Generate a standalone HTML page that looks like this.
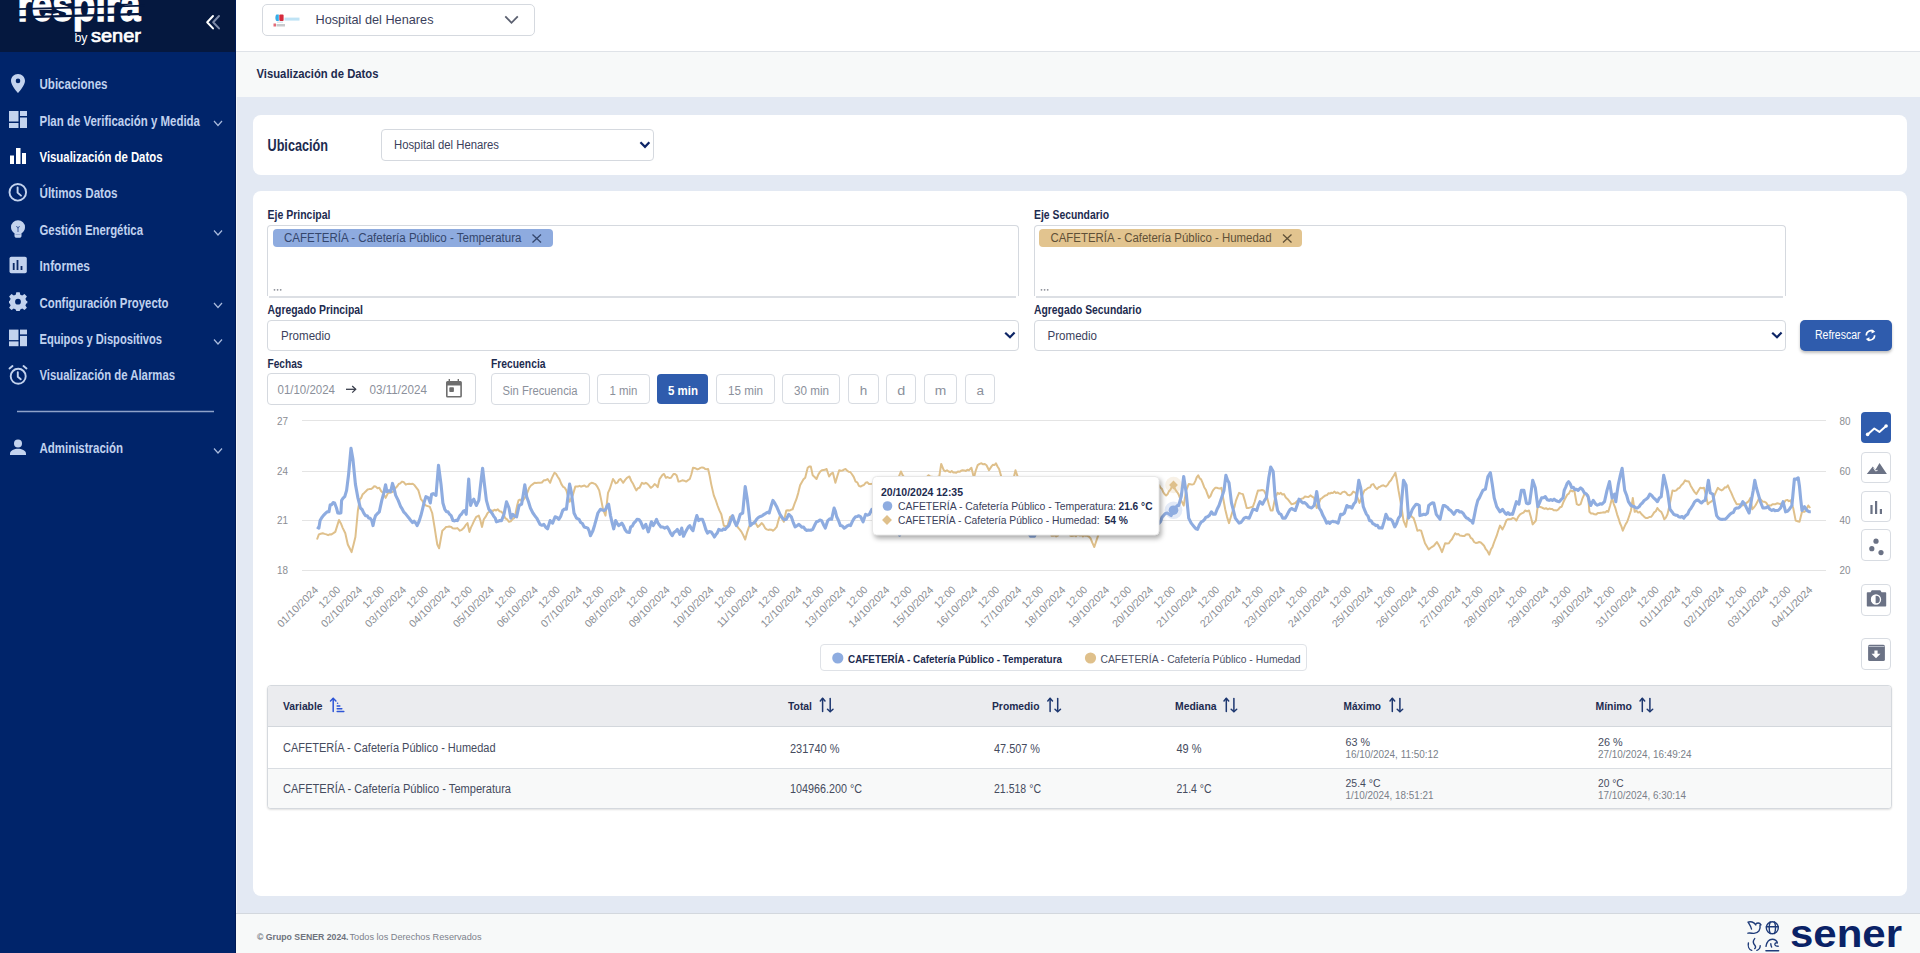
<!DOCTYPE html>
<html><head><meta charset="utf-8"><title>Visualización de Datos</title>
<style>
*{box-sizing:border-box;margin:0;padding:0}
html,body{width:1920px;height:953px;overflow:hidden;background:#e3e9f3;font-family:'Liberation Sans', sans-serif}
.a{position:absolute}
#sb{left:0;top:0;width:236px;height:953px;background:#00246a;border-right:1px solid #001a55}
#sbtop{left:0;top:0;width:235px;height:52px;background:#05183f}
#sbw{left:236px;top:52px;width:1px;height:901px;background:#f4f6fa}
#hdr{left:236px;top:0;width:1684px;height:52px;background:#fff;border-bottom:1px solid #dfe3e8}
#bc{left:236px;top:52px;width:1684px;height:45px;background:#f7f9f9}
.card{background:#fff;border-radius:8px}
.box{border:1px solid #d5d9df;border-radius:4px;background:#fff}
.btn{border:1px solid #d8dce2;border-radius:4px;background:#fff}
#ftr{left:236px;top:913px;width:1684px;height:40px;background:#f7f9f9;border-top:1px solid #d3d8de}
svg{position:absolute;left:0;top:0}
</style></head><body>
<div class="a" id="sb"></div>
<div class="a" id="sbtop"></div>
<div class="a" id="sbw"></div>
<div class="a" id="hdr"></div>
<div class="a box" style="left:262px;top:4px;width:273px;height:32px;border-radius:5px"></div>
<div class="a" id="bc"></div>
<div class="a card" style="left:253px;top:115px;width:1654px;height:60px"></div>
<div class="a box" style="left:381px;top:129px;width:273px;height:32px;border-radius:4px"></div>
<div class="a card" style="left:253px;top:191px;width:1654px;height:705px"></div>
<div class="a box" style="left:267px;top:225px;width:752px;height:71px;border-radius:4px 4px 0 0;border-bottom:none"></div><div class="a" style="left:269px;top:296px;width:747px;height:2px;background:#dcdfe4"></div>
<div class="a box" style="left:1034px;top:225px;width:752px;height:71px;border-radius:4px 4px 0 0;border-bottom:none"></div><div class="a" style="left:1036px;top:296px;width:747px;height:2px;background:#dcdfe4"></div>
<div class="a" style="left:273px;top:229px;width:280px;height:18px;background:#8eabdf;border-radius:4px"></div>
<div class="a" style="left:1039px;top:229px;width:263px;height:18px;background:#e2c48f;border-radius:4px"></div>
<div class="a box" style="left:267px;top:320px;width:752px;height:31px"></div>
<div class="a box" style="left:1034px;top:320px;width:752px;height:31px"></div>
<div class="a" style="left:1800px;top:320px;width:92px;height:31px;background:#2f5cad;border-radius:5px;box-shadow:0 2px 3px rgba(0,0,0,.25)"></div>
<div class="a box" style="left:267px;top:373px;width:209px;height:32px"></div>
<div class="a btn" style="left:491px;top:373px;width:99px;height:32px"></div>
<div class="a btn" style="left:597px;top:374px;width:53px;height:30px"></div>
<div class="a" style="left:657px;top:374px;width:51px;height:30px;background:#2f5cad;border-radius:4px"></div>
<div class="a btn" style="left:716px;top:374px;width:59px;height:30px"></div>
<div class="a btn" style="left:782px;top:374px;width:58px;height:30px"></div>
<div class="a btn" style="left:848px;top:374px;width:31px;height:30px"></div>
<div class="a btn" style="left:886px;top:374px;width:30px;height:30px"></div>
<div class="a btn" style="left:924px;top:374px;width:33px;height:30px"></div>
<div class="a btn" style="left:965px;top:374px;width:30px;height:30px"></div>
<div class="a" style="left:1861px;top:412px;width:30px;height:31px;background:#2f5cad;border-radius:4px"></div>
<div class="a btn" style="left:1861px;top:452px;width:30px;height:31px"></div>
<div class="a btn" style="left:1861px;top:491px;width:30px;height:31px"></div>
<div class="a btn" style="left:1861px;top:529px;width:30px;height:32px"></div>
<div class="a btn" style="left:1861px;top:584px;width:30px;height:32px"></div>
<div class="a btn" style="left:1861px;top:638px;width:30px;height:32px"></div>
<div class="a" style="left:820px;top:644px;width:487px;height:27px;border:1px solid #dfe2e7;border-radius:4px;background:#fff"></div>
<div class="a" style="left:267px;top:685px;width:1625px;height:124px;border:1px solid #d5d9de;border-radius:4px;background:#fff;box-shadow:0 1px 2px rgba(0,0,0,.12);overflow:hidden">
  <div class="a" style="left:0;top:0;width:100%;height:41px;background:#ebecef;border-bottom:1px solid #d3d7dc"></div>
  <div class="a" style="left:0;top:82px;width:100%;height:41px;background:#f8f9f9;border-top:1px solid #d9dde2"></div>
</div>
<div class="a" id="ftr"></div>
<svg width="1920" height="953" viewBox="0 0 1920 953" font-family="'Liberation Sans', sans-serif">
<!-- grid -->
<g stroke="#e4e4e4" stroke-width="1">
<line x1="302" y1="420.5" x2="1826" y2="420.5"/>
<line x1="302" y1="471.5" x2="1826" y2="471.5"/>
<line x1="302" y1="520.5" x2="1826" y2="520.5"/>
<line x1="302" y1="570.5" x2="1826" y2="570.5"/>
</g>
<polyline fill="none" stroke="#dfc08b" stroke-width="2" stroke-linejoin="round" points="317.0,539.5 318.9,534.4 320.8,533.7 322.7,533.2 324.5,533.9 326.4,534.4 328.1,535.2 329.8,534.3 331.5,534.4 333.4,533.2 335.3,531.9 337.1,526.1 339.0,520.0 340.9,523.4 342.8,528.1 345.3,533.2 347.8,544.5 349.7,548.3 351.6,552.1 353.5,544.8 355.4,537.0 357.9,510.5 359.8,499.2 361.3,497.7 362.7,494.2 364.2,492.9 365.9,491.2 367.6,489.5 369.3,489.1 370.9,489.1 372.5,488.2 374.0,486.3 375.6,486.6 377.5,488.2 379.3,487.8 381.2,491.3 383.1,492.9 385.6,497.9 388.1,492.9 389.8,492.8 391.5,492.3 393.2,491.6 395.1,488.4 397.0,486.6 398.7,484.0 400.3,483.3 402.0,481.6 403.9,482.3 405.8,484.7 407.5,483.9 409.1,483.8 410.8,484.1 412.7,483.8 414.6,485.3 416.5,487.8 418.4,490.4 420.9,499.2 422.6,501.2 424.2,504.1 425.9,505.5 427.8,506.1 429.7,506.7 432.2,513.0 434.7,528.1 436.0,536.6 437.3,544.5 439.1,548.3 440.7,539.5 442.3,530.7 444.2,529.1 446.1,526.9 447.8,526.8 449.4,526.5 451.1,526.9 452.7,528.2 454.2,528.5 455.8,528.5 457.4,528.1 459.9,530.7 461.8,529.8 463.7,528.1 465.6,525.2 467.5,523.1 469.4,531.9 470.9,527.6 472.5,524.4 474.4,520.2 476.3,516.8 478.8,515.6 480.4,520.4 482.0,526.9 483.8,519.3 485.7,516.7 487.6,513.0 489.5,511.6 491.4,510.5 493.0,510.9 494.5,509.7 496.1,510.5 497.7,509.3 499.6,511.2 501.5,511.8 503.4,514.0 505.2,518.1 507.1,519.4 509.0,521.8 510.7,521.4 512.4,519.3 514.1,518.1 515.6,513.2 517.0,506.1 518.5,500.4 520.0,499.5 521.4,500.7 522.9,500.4 524.8,497.8 526.7,494.1 529.2,487.8 531.0,485.5 532.9,484.1 534.6,482.8 536.3,482.9 538.0,482.8 540.0,482.8 541.9,482.5 543.8,480.3 545.7,480.2 547.6,479.0 550.1,482.8 551.6,478.7 553.0,475.6 554.5,472.7 556.0,473.8 557.6,476.5 559.5,479.4 561.4,484.1 563.1,486.8 564.7,487.7 566.4,490.4 568.0,496.2 569.6,501.7 571.2,498.4 572.7,495.4 575.3,486.6 577.8,486.6 579.5,485.8 581.1,486.7 582.8,486.0 584.5,485.5 586.1,486.7 587.8,486.6 589.7,483.9 591.6,482.8 593.5,483.3 595.4,484.1 597.3,486.7 599.2,490.4 601.1,499.4 603.0,509.3 605.5,515.6 608.0,492.9 609.7,489.2 611.3,484.2 613.0,479.0 614.3,480.8 615.6,483.4 617.3,482.7 618.9,479.9 620.6,479.0 623.1,482.8 625.0,480.1 626.9,477.8 629.4,476.5 631.3,481.0 633.2,484.1 634.8,487.5 636.3,490.4 637.9,488.3 639.5,487.8 642.0,482.8 643.9,483.8 645.8,482.8 647.5,483.9 649.1,485.6 650.8,487.8 652.7,486.5 654.6,484.1 656.2,485.3 657.7,487.2 659.6,479.0 661.1,476.9 662.5,474.8 664.0,474.0 665.9,477.8 667.6,477.0 669.3,478.0 671.0,477.8 673.5,474.0 675.0,474.1 676.6,475.3 678.5,481.6 680.4,481.2 682.3,480.3 684.2,480.7 686.1,481.6 688.0,480.2 689.8,479.0 691.4,474.3 693.0,467.7 694.4,468.0 695.9,468.5 697.3,469.4 698.7,469.0 700.4,467.9 702.0,467.4 703.7,467.7 705.2,469.0 706.6,469.2 708.1,469.0 709.7,476.0 711.2,484.1 713.8,495.4 715.6,499.8 717.5,505.5 719.4,510.4 721.3,514.3 723.8,525.6 725.7,526.5 727.6,525.6 730.1,516.8 731.4,516.2 732.7,516.8 734.5,521.5 736.4,524.4 738.1,527.7 739.8,529.6 741.5,531.9 743.4,535.5 745.2,539.5 747.1,532.4 749.0,526.9 750.7,524.3 752.4,524.4 754.1,521.8 756.0,523.8 757.8,526.9 759.7,525.4 761.6,523.1 763.3,524.7 765.0,527.9 766.7,529.4 768.2,529.9 769.8,529.6 771.4,529.7 772.9,530.7 774.8,529.2 776.7,526.9 778.4,520.4 780.0,515.6 781.9,518.2 783.8,521.8 786.3,510.5 787.9,510.3 789.5,510.6 791.0,509.8 792.6,509.3 794.5,503.8 796.4,499.2 798.2,493.1 800.1,485.3 801.8,482.2 803.5,479.3 805.2,477.8 807.7,467.7 809.2,466.6 810.8,466.4 812.7,475.3 814.6,477.0 816.5,479.0 818.4,474.4 820.3,471.5 821.9,470.2 823.5,470.0 825.0,469.8 826.6,469.0 829.1,476.5 831.0,473.9 832.9,472.7 835.4,482.8 837.3,476.2 839.2,470.2 840.8,470.7 842.4,470.6 843.9,469.6 845.5,469.0 847.1,470.6 848.6,471.7 850.2,472.0 851.8,474.0 853.7,476.9 855.6,481.6 857.3,482.3 858.9,485.8 860.6,486.6 862.3,485.7 863.9,485.0 865.6,482.8 867.3,482.3 869.0,483.9 870.7,484.1 872.4,483.6 874.0,483.7 875.7,482.8 877.2,481.9 878.7,482.8 880.3,480.5 881.8,480.9 883.3,480.3 884.8,480.5 886.3,480.6 887.8,480.0 889.3,479.7 890.8,479.0 892.3,479.3 893.8,479.4 895.4,478.0 896.9,478.4 898.4,477.8 900.9,471.5 902.8,475.5 904.7,477.8 906.2,479.0 907.7,478.6 909.2,479.9 910.7,480.5 912.2,480.3 913.7,480.2 915.1,480.1 916.6,479.4 918.1,479.6 919.5,479.4 921.0,479.0 922.5,477.4 924.0,477.8 925.6,477.8 927.1,476.8 928.6,475.3 930.3,476.6 931.9,476.7 933.6,477.8 935.0,477.9 936.5,477.3 937.9,476.7 939.3,476.5 941.2,463.9 943.7,470.2 945.4,471.3 947.0,470.2 948.7,471.5 950.2,472.2 951.7,471.0 953.3,472.4 954.8,472.4 956.3,472.7 957.9,471.5 959.5,471.8 961.0,470.8 962.6,470.2 964.2,470.4 965.8,471.0 967.3,469.7 968.9,470.2 971.4,467.7 973.9,477.8 975.8,470.5 977.7,465.2 979.6,463.9 981.5,463.3 983.2,464.3 984.8,464.0 986.5,465.2 989.0,470.2 991.5,466.4 993.0,464.7 994.4,465.1 995.9,463.3 997.5,466.5 999.1,469.0 1001.6,477.8 1003.3,479.4 1005.0,481.9 1006.7,482.8 1008.2,482.2 1009.8,482.5 1011.4,481.3 1012.9,481.6 1014.2,475.8 1015.5,470.2 1018.0,477.8 1020.0,480.3 1021.4,481.1 1022.8,481.4 1024.2,481.5 1025.6,480.6 1027.0,481.2 1028.4,480.8 1029.8,480.6 1031.2,481.4 1032.6,481.6 1034.0,483.5 1035.4,484.8 1036.8,485.8 1038.2,487.5 1039.6,487.4 1041.0,488.5 1042.4,490.3 1043.8,491.2 1045.2,492.9 1046.8,503.0 1048.3,514.1 1049.9,525.3 1051.5,535.7 1053.1,535.7 1054.7,535.3 1056.2,536.4 1057.8,535.7 1059.4,532.3 1060.9,526.8 1062.5,521.6 1064.1,518.1 1065.7,521.6 1067.2,527.6 1068.8,530.4 1070.4,535.7 1071.8,536.1 1073.1,535.8 1074.5,535.3 1075.9,536.3 1077.3,534.7 1078.6,535.0 1080.0,535.6 1081.4,534.7 1082.8,536.4 1084.1,535.2 1085.5,535.7 1087.2,535.8 1088.8,536.5 1090.5,538.2 1092.4,542.9 1094.3,547.0 1096.2,541.2 1098.1,535.7 1099.5,531.3 1101.0,526.7 1102.4,522.3 1103.8,517.9 1105.2,512.7 1106.7,507.1 1108.1,503.0 1109.5,501.8 1110.9,500.1 1112.3,498.7 1113.7,498.5 1115.1,497.8 1116.5,495.6 1117.9,494.7 1119.3,493.7 1120.7,492.9 1122.1,492.7 1123.5,491.8 1124.9,491.4 1126.3,491.1 1127.7,489.9 1129.1,490.1 1130.5,489.7 1131.9,487.5 1133.3,487.8 1134.7,488.4 1136.1,487.7 1137.5,486.2 1138.9,486.6 1140.3,486.7 1141.7,487.0 1143.1,485.6 1144.5,485.7 1145.9,485.3 1147.2,486.1 1148.5,485.9 1149.9,486.2 1151.2,485.2 1152.5,485.6 1153.8,484.7 1155.1,485.7 1156.5,485.9 1157.8,485.6 1159.1,485.3 1160.5,487.8 1161.9,488.8 1163.3,492.2 1164.7,494.3 1166.1,495.4 1167.6,494.2 1169.0,491.2 1170.5,489.6 1171.9,486.5 1173.4,484.7 1174.7,488.2 1176.0,490.7 1177.3,492.3 1178.6,494.4 1179.9,497.9 1181.8,501.6 1183.7,505.5 1186.2,490.4 1188.7,484.1 1190.4,484.2 1192.1,484.6 1193.8,484.1 1195.3,481.1 1196.7,477.3 1198.2,475.3 1199.7,478.4 1201.1,479.4 1202.6,482.8 1204.2,487.2 1205.8,489.7 1207.3,493.8 1208.9,497.9 1210.5,496.0 1212.1,492.1 1213.6,489.6 1215.2,487.8 1216.8,487.8 1218.3,488.2 1219.9,488.5 1221.5,487.8 1223.3,498.9 1225.2,509.3 1227.1,517.1 1229.0,523.1 1230.9,516.8 1232.8,510.5 1234.4,507.0 1235.9,500.9 1237.5,496.7 1239.1,492.9 1241.0,493.6 1242.9,494.1 1244.8,500.6 1246.7,508.0 1248.2,508.1 1249.8,507.6 1251.4,507.1 1252.9,506.7 1254.6,502.0 1256.3,496.0 1258.0,490.4 1260.0,490.4 1261.9,490.0 1263.8,490.4 1265.3,493.3 1266.9,496.7 1268.8,504.3 1270.7,510.5 1272.6,510.5 1275.1,497.9 1277.6,492.9 1279.2,494.0 1280.8,492.9 1282.3,494.5 1283.9,494.1 1285.8,497.6 1287.7,499.2 1289.6,501.7 1291.5,504.2 1293.4,503.7 1295.3,503.0 1297.0,501.1 1298.6,500.5 1300.3,499.2 1301.9,498.6 1303.4,498.2 1305.0,496.4 1306.6,496.7 1308.5,497.0 1310.4,495.4 1312.2,496.7 1314.1,497.9 1315.4,502.8 1316.7,508.0 1318.6,504.2 1320.4,499.2 1322.1,498.1 1323.8,496.6 1325.5,495.4 1327.0,495.1 1328.4,493.3 1329.9,493.6 1331.4,492.7 1332.8,493.1 1334.3,491.6 1335.9,493.1 1337.4,492.4 1339.0,493.4 1340.6,494.1 1342.5,492.1 1344.4,491.6 1346.1,492.7 1347.7,494.8 1349.4,495.4 1351.3,494.3 1353.2,491.6 1355.7,492.9 1357.6,497.9 1359.5,503.0 1361.2,498.4 1362.8,494.0 1364.5,490.4 1366.4,489.3 1368.3,487.8 1370.0,487.4 1371.6,484.6 1373.3,484.1 1375.2,487.2 1377.1,489.1 1378.7,487.2 1380.2,486.6 1381.8,485.7 1383.4,485.3 1385.9,486.6 1387.6,484.9 1389.3,482.0 1391.0,480.3 1392.5,477.5 1393.9,475.5 1395.4,472.7 1397.0,480.8 1398.5,490.4 1401.0,504.2 1403.5,520.6 1406.1,526.9 1408.0,514.3 1409.4,515.7 1410.8,515.4 1412.2,517.2 1413.6,518.1 1415.5,523.9 1417.4,530.7 1419.3,530.1 1421.2,530.7 1423.1,537.1 1425.0,543.3 1426.8,546.3 1428.7,549.5 1430.4,548.0 1432.1,546.9 1433.8,545.8 1435.3,544.0 1436.9,542.0 1438.6,544.7 1440.3,548.1 1442.0,552.1 1443.5,548.0 1445.1,543.3 1447.0,543.6 1448.9,543.3 1450.5,540.8 1452.1,539.0 1453.6,535.9 1455.2,533.2 1456.8,534.5 1458.3,533.9 1459.9,535.6 1461.5,535.7 1463.0,536.1 1464.5,536.0 1466.0,534.6 1467.5,534.3 1469.0,534.4 1470.7,537.8 1472.4,538.9 1474.1,542.0 1475.8,543.0 1477.4,542.8 1479.1,542.0 1480.8,542.5 1482.4,544.0 1484.1,545.8 1485.8,549.2 1487.5,551.2 1489.2,554.6 1490.9,549.6 1492.5,546.9 1494.2,542.0 1496.7,535.7 1498.3,530.5 1500.0,525.6 1502.5,529.4 1504.4,525.6 1506.3,520.6 1507.9,519.2 1509.4,519.2 1511.0,519.1 1512.6,518.1 1514.5,518.4 1516.4,520.6 1518.2,516.9 1520.1,514.3 1521.8,513.4 1523.5,512.6 1525.2,510.5 1527.1,511.4 1529.0,510.5 1530.8,516.7 1532.7,524.4 1534.3,522.5 1535.9,520.6 1537.8,505.5 1539.5,506.8 1541.1,507.2 1542.8,508.0 1544.5,508.8 1546.1,508.2 1547.8,509.3 1549.3,508.6 1550.8,508.9 1552.2,509.0 1553.7,510.2 1555.2,510.3 1556.7,510.5 1558.4,509.4 1560.0,507.3 1561.7,506.7 1563.6,501.7 1565.5,497.9 1567.2,494.8 1568.8,493.6 1570.5,490.4 1572.4,491.4 1574.3,490.4 1576.8,504.2 1578.7,505.1 1580.6,504.2 1582.5,498.3 1584.4,494.1 1586.2,493.9 1588.1,495.4 1589.4,511.8 1591.1,513.5 1592.7,513.4 1594.4,514.3 1596.1,514.4 1597.8,513.1 1599.5,513.0 1601.0,512.7 1602.4,512.6 1603.9,512.3 1605.4,512.4 1606.8,511.0 1608.3,511.8 1610.2,505.3 1612.1,497.9 1613.8,504.1 1615.4,508.2 1617.1,514.3 1618.5,518.3 1619.9,523.0 1621.4,526.4 1622.8,530.7 1624.3,527.1 1625.7,524.1 1627.2,521.8 1629.1,516.2 1631.0,510.5 1632.8,497.9 1634.7,511.8 1636.4,510.8 1638.1,512.6 1639.8,511.8 1641.4,514.0 1642.9,515.4 1644.5,517.2 1646.1,518.1 1647.8,517.9 1649.4,517.0 1651.1,516.8 1652.7,514.8 1654.2,512.4 1655.8,511.2 1657.4,508.0 1659.3,510.5 1661.2,511.8 1662.8,515.1 1664.3,519.3 1665.9,517.6 1667.5,514.3 1669.2,506.8 1670.8,498.9 1672.5,490.4 1674.4,491.0 1676.3,490.4 1678.0,488.5 1679.6,487.8 1681.3,485.3 1683.2,483.6 1685.1,480.3 1687.0,481.3 1688.9,481.6 1690.8,485.9 1692.7,489.1 1694.6,492.1 1696.4,494.1 1698.3,490.8 1700.2,487.8 1702.1,488.2 1704.0,487.8 1705.9,495.1 1707.8,504.2 1709.5,502.6 1711.1,501.6 1712.8,500.4 1714.5,495.2 1716.1,491.7 1717.8,487.8 1719.7,489.4 1721.6,490.4 1723.2,489.4 1724.8,487.3 1726.3,487.5 1727.9,485.3 1729.6,489.4 1731.2,492.6 1732.9,496.7 1734.8,500.8 1736.7,504.2 1738.3,504.3 1740.0,504.2 1741.4,504.9 1742.8,505.5 1744.7,504.0 1746.6,502.9 1748.5,501.4 1750.4,497.9 1752.2,509.2 1753.8,507.6 1755.4,505.5 1757.3,502.1 1759.2,497.9 1760.9,499.7 1762.5,501.4 1764.2,501.7 1766.1,502.6 1768.0,505.5 1769.5,505.5 1771.0,505.5 1772.5,504.2 1774.0,504.3 1775.5,504.2 1777.0,503.3 1778.5,503.6 1780.1,504.0 1781.6,503.4 1783.1,504.2 1785.6,500.4 1787.3,499.9 1788.9,501.2 1790.6,500.4 1791.9,504.3 1793.2,508.0 1795.7,520.6 1797.6,521.2 1799.5,521.8 1802.0,511.8 1804.5,511.8 1806.4,509.6 1808.3,505.5 1810.2,508.0"/>
<polyline fill="none" stroke="#8eace0" stroke-width="3.1" stroke-linejoin="round" points="317.0,526.9 318.9,528.1 320.1,520.6 321.7,517.7 323.3,515.6 325.2,513.7 327.1,511.9 329.0,511.8 330.2,504.8 331.7,504.6 333.1,502.6 334.6,503.0 336.5,508.0 337.8,513.0 339.4,513.1 340.9,513.0 341.6,500.4 343.1,498.2 344.7,496.7 346.6,490.4 348.5,475.3 351.0,448.2 352.9,458.9 355.4,484.1 357.9,497.9 360.4,508.0 362.1,509.5 363.8,513.1 365.5,515.6 367.1,515.7 368.6,517.9 370.2,518.3 371.8,520.6 373.0,525.6 374.3,519.6 375.6,515.6 377.5,513.5 379.3,511.8 381.8,500.4 383.7,493.3 385.6,484.7 386.9,491.6 388.8,490.7 390.7,491.6 392.5,483.4 394.1,488.7 395.7,495.4 398.2,500.4 400.7,506.7 402.3,509.2 403.9,512.2 405.4,513.6 407.0,515.6 408.9,517.9 410.8,520.6 412.5,522.6 414.1,521.2 415.8,523.1 417.1,525.6 419.0,521.5 420.9,515.6 422.6,508.8 424.2,502.1 425.9,496.7 428.4,497.9 430.3,503.0 431.6,494.1 433.1,493.6 434.5,494.5 436.0,495.4 438.5,465.2 441.0,484.1 442.9,503.0 444.8,509.3 446.4,511.6 448.0,511.7 449.5,514.2 451.1,515.6 453.0,520.6 454.5,520.9 455.9,520.3 457.4,520.6 459.9,515.6 461.6,514.0 463.3,511.2 465.0,510.5 466.2,514.3 468.7,479.0 470.6,505.5 472.2,501.3 473.8,499.2 476.3,505.5 478.8,500.4 480.7,483.6 482.6,468.3 484.5,484.8 486.4,500.4 488.9,509.3 490.5,511.3 492.0,513.3 493.6,516.1 495.2,518.1 496.4,521.8 498.1,521.3 499.8,520.5 501.5,520.6 504.0,514.3 506.5,501.7 509.0,508.0 510.9,518.1 512.8,514.3 514.7,516.3 516.6,516.8 519.1,505.5 521.6,504.2 523.2,494.9 524.8,484.7 526.7,496.7 528.5,501.7 530.4,508.0 532.9,513.0 534.8,515.7 536.7,518.1 538.4,521.3 540.0,524.4 541.9,525.3 543.8,524.4 545.7,527.2 547.6,528.8 550.1,520.6 552.6,523.1 555.1,516.8 557.0,517.5 558.9,519.3 560.8,516.1 562.7,510.5 564.5,509.0 566.4,509.3 568.0,496.5 569.6,484.1 571.5,492.9 574.0,513.0 576.5,518.1 579.0,519.3 580.7,522.5 582.4,523.5 584.1,526.9 586.0,527.5 587.8,528.1 589.1,530.8 590.4,535.7 592.9,530.7 594.6,525.2 596.2,519.5 597.9,513.0 600.4,509.3 602.3,510.1 604.2,510.5 605.7,509.3 607.1,505.9 608.6,504.2 610.5,515.6 612.1,522.7 613.7,528.8 615.6,520.6 617.2,523.3 618.7,525.6 620.2,524.5 621.8,523.1 623.5,525.9 625.2,529.8 626.9,531.9 629.4,532.5 630.7,526.9 632.3,526.1 633.9,523.0 635.4,521.6 637.0,519.3 638.9,519.5 640.7,521.8 643.3,528.1 645.8,524.4 648.3,531.9 649.8,527.3 651.4,521.8 653.3,525.6 654.9,522.8 656.5,519.3 658.0,523.0 659.4,525.1 660.9,526.9 662.8,527.0 664.7,528.1 667.2,526.9 668.9,529.6 670.5,533.2 672.2,535.7 673.9,532.5 675.6,531.4 677.3,529.4 679.8,534.4 681.7,528.1 683.5,536.3 685.1,532.8 686.6,530.0 688.2,527.2 689.8,525.6 691.4,528.8 693.0,530.7 694.9,522.3 696.8,515.6 698.7,520.6 700.5,519.3 702.4,519.3 704.1,523.7 705.8,529.5 707.5,533.2 709.4,531.5 711.2,531.9 712.8,534.3 714.4,537.0 715.9,534.6 717.3,532.9 718.8,529.4 720.4,530.2 722.0,530.3 723.5,528.9 725.1,529.4 727.0,527.3 728.9,525.6 730.8,520.3 732.7,515.6 734.5,521.5 736.4,525.6 738.3,521.0 740.2,514.3 742.7,513.0 745.2,486.6 747.1,497.9 748.7,510.9 750.3,525.6 752.2,523.6 754.1,523.1 756.6,519.3 758.1,517.7 759.6,516.7 761.1,516.3 762.6,515.5 764.1,514.3 765.8,513.3 767.5,512.2 769.2,513.0 771.0,506.5 772.9,500.4 774.8,503.2 776.7,506.7 778.4,510.7 780.0,514.3 782.5,518.1 784.4,519.8 786.3,519.3 788.8,514.3 791.3,516.8 793.2,522.3 795.1,526.9 797.0,525.7 798.9,524.4 800.5,525.9 802.0,527.3 803.6,527.1 805.2,529.4 806.7,530.4 808.2,530.1 809.7,530.3 811.2,530.1 812.7,529.4 814.6,525.3 816.5,521.8 818.2,521.2 819.9,520.0 821.6,520.6 823.5,524.7 825.3,528.1 827.8,520.6 829.7,518.9 831.6,519.3 834.1,508.0 835.4,511.4 836.7,516.8 838.5,520.5 840.4,525.6 842.3,526.0 844.2,528.1 845.8,527.1 847.4,525.8 848.9,525.0 850.5,525.6 852.2,521.8 853.9,518.8 855.6,516.8 857.3,516.5 858.9,515.7 860.6,516.8 863.1,521.8 865.6,514.3 867.5,515.2 869.4,514.3 871.9,509.3 873.8,510.2 875.7,510.5 877.4,511.4 879.0,513.3 880.7,515.6 882.3,515.9 883.9,516.5 885.4,516.6 887.0,518.1 888.6,520.8 890.1,523.0 891.7,523.6 893.3,525.6 894.9,527.9 896.5,529.4 898.0,531.8 899.6,535.1 901.3,532.0 903.0,529.1 904.7,526.9 906.2,526.7 907.7,524.0 909.2,522.7 910.7,523.9 912.2,521.8 913.8,523.1 915.4,523.5 916.9,525.7 918.5,526.9 920.1,524.8 921.6,525.1 923.2,525.2 924.8,523.1 926.4,525.2 928.0,526.1 929.5,526.3 931.1,528.1 932.7,527.5 934.2,526.7 935.8,527.9 937.4,526.9 939.0,527.3 940.5,528.2 942.1,527.4 943.7,528.1 945.3,527.1 946.9,528.2 948.4,528.4 950.0,526.9 951.6,526.5 953.1,525.1 954.7,523.8 956.3,521.8 957.9,523.7 959.5,523.7 961.0,525.7 962.6,526.9 964.2,526.9 965.8,526.4 967.3,526.7 968.9,528.1 970.5,527.3 972.0,526.9 973.6,527.7 975.2,526.9 976.8,528.3 978.4,527.4 979.9,528.8 981.5,528.1 983.1,529.6 984.6,529.8 986.2,528.8 987.8,529.4 989.4,528.4 991.0,528.1 992.5,527.7 994.1,528.1 995.7,527.1 997.2,527.8 998.8,528.2 1000.4,526.9 1002.0,528.0 1003.5,527.5 1005.1,528.2 1006.7,528.1 1008.2,528.8 1009.8,527.1 1011.4,528.5 1012.9,528.1 1014.3,529.1 1015.7,528.8 1017.2,528.7 1018.6,528.0 1020.0,528.1 1021.5,527.6 1023.0,529.3 1024.6,528.5 1026.1,529.9 1027.6,529.4 1029.2,534.0 1030.7,536.3 1032.6,536.1 1034.5,536.3 1036.0,532.3 1037.6,528.8 1039.1,529.7 1040.6,529.1 1042.2,527.6 1043.7,527.3 1045.2,528.1 1046.6,527.3 1048.0,529.1 1049.4,528.8 1050.8,527.3 1052.2,528.9 1053.6,529.3 1055.0,528.5 1056.4,527.7 1057.8,528.1 1059.2,528.1 1060.6,526.9 1062.0,526.5 1063.4,528.7 1064.8,527.8 1066.2,527.4 1067.6,528.2 1069.0,526.9 1070.4,526.9 1071.8,527.6 1073.2,527.4 1074.6,525.8 1076.0,525.7 1077.4,525.7 1078.8,525.4 1080.2,526.1 1081.6,525.2 1083.0,525.6 1084.4,525.7 1085.8,525.3 1087.2,527.4 1088.6,526.4 1090.0,526.9 1091.4,527.5 1092.8,528.5 1094.2,527.6 1095.6,528.1 1097.0,528.8 1098.4,527.5 1099.8,527.3 1101.2,527.0 1102.5,525.6 1103.9,526.3 1105.3,525.4 1106.7,524.7 1108.1,525.6 1109.5,526.5 1110.9,525.1 1112.3,526.0 1113.7,526.7 1115.1,526.5 1116.5,526.0 1117.9,526.7 1119.3,526.9 1120.7,526.9 1122.1,527.4 1123.5,525.7 1124.9,526.6 1126.3,525.7 1127.7,525.6 1129.1,526.7 1130.5,525.9 1131.9,525.9 1133.3,525.6 1134.7,526.1 1136.1,526.3 1137.5,525.1 1138.9,525.3 1140.3,524.9 1141.7,524.8 1143.1,525.1 1144.5,524.4 1145.9,524.4 1147.2,524.3 1148.5,524.1 1149.9,525.1 1151.2,524.4 1152.5,524.7 1153.8,524.7 1155.1,522.9 1156.5,523.5 1157.8,524.3 1159.1,523.1 1160.6,521.4 1162.0,517.2 1163.5,515.6 1165.4,513.4 1167.3,513.0 1169.2,514.2 1171.1,515.6 1173.4,509.9 1174.7,507.8 1176.1,507.1 1177.4,505.6 1178.7,505.5 1181.2,496.7 1183.7,476.5 1186.2,492.9 1188.7,518.1 1191.2,523.1 1192.8,525.1 1194.3,526.9 1195.9,528.8 1197.5,529.4 1199.4,524.8 1201.3,521.8 1202.9,521.1 1204.4,519.7 1206.0,517.2 1207.6,516.8 1209.5,515.2 1211.4,511.8 1213.3,514.2 1215.2,514.3 1217.1,509.2 1219.0,505.5 1221.5,497.9 1224.0,490.4 1225.9,475.3 1227.5,480.1 1229.0,482.8 1231.5,503.0 1233.4,510.3 1235.3,518.1 1237.2,520.6 1239.1,523.1 1240.8,522.6 1242.4,520.6 1244.1,518.1 1245.8,517.3 1247.5,517.9 1249.2,518.1 1251.1,513.7 1252.9,509.3 1254.8,509.5 1256.7,510.5 1258.3,505.4 1260.0,501.7 1262.5,504.2 1264.4,500.6 1266.3,497.9 1268.8,477.8 1270.7,467.1 1273.2,471.5 1275.1,496.7 1277.6,510.5 1279.3,513.6 1281.0,514.4 1282.7,518.1 1285.2,518.1 1286.9,515.3 1288.5,512.1 1290.2,509.3 1291.9,508.5 1293.6,509.7 1295.3,510.5 1297.2,505.1 1299.0,499.2 1300.9,501.1 1302.8,503.0 1304.7,502.6 1306.6,504.2 1308.3,506.6 1309.9,507.4 1311.6,508.0 1314.1,505.5 1315.4,499.7 1316.7,491.6 1319.2,508.0 1321.1,510.9 1323.0,515.6 1324.8,518.8 1326.7,523.1 1328.2,521.8 1329.7,523.3 1331.2,521.9 1332.6,521.3 1334.1,521.8 1335.6,521.8 1338.1,523.1 1340.6,514.3 1342.5,514.6 1344.4,513.0 1346.9,505.5 1348.6,507.1 1350.2,506.6 1351.9,508.0 1353.8,504.0 1355.7,501.7 1357.2,492.0 1358.8,480.3 1360.7,487.8 1363.3,506.7 1364.8,510.3 1366.4,514.1 1368.0,516.1 1369.5,520.6 1371.1,520.8 1372.7,523.6 1374.2,524.2 1375.8,525.6 1377.4,525.2 1378.9,527.9 1380.5,527.8 1382.1,528.1 1384.0,521.9 1385.9,514.3 1388.4,519.3 1390.3,519.0 1392.2,520.6 1394.7,526.9 1396.6,523.4 1398.5,518.1 1400.4,515.6 1402.0,496.9 1403.5,480.3 1406.1,485.3 1408.6,518.1 1410.5,514.6 1412.4,509.3 1414.2,506.6 1416.1,504.2 1417.7,504.5 1419.3,505.5 1419.9,515.6 1421.8,515.1 1423.7,514.3 1425.6,514.7 1427.5,513.0 1428.7,505.5 1430.4,504.1 1432.1,502.9 1433.8,503.0 1436.3,514.3 1438.2,516.9 1440.1,519.3 1441.7,511.8 1443.2,505.5 1444.6,505.5 1446.1,506.6 1447.5,507.3 1448.9,509.3 1450.6,510.3 1452.2,512.2 1453.9,514.3 1456.4,510.5 1458.1,510.5 1459.8,512.0 1461.5,511.8 1463.2,513.4 1464.8,516.0 1466.5,518.1 1468.1,518.6 1469.7,520.2 1471.2,520.7 1472.8,523.1 1474.5,514.9 1476.1,506.8 1477.8,500.4 1479.5,497.6 1481.2,493.9 1482.9,490.4 1485.4,489.1 1487.9,476.5 1490.4,472.7 1492.3,484.6 1494.2,497.9 1496.7,506.7 1498.3,509.2 1500.0,511.8 1502.5,509.3 1505.0,513.0 1506.5,514.3 1508.0,512.6 1509.6,514.5 1511.1,513.9 1512.6,514.3 1514.5,508.0 1516.4,501.7 1518.9,504.2 1521.4,490.4 1523.9,490.4 1526.4,503.0 1528.0,503.8 1529.6,503.0 1531.2,491.4 1532.7,480.3 1535.3,487.8 1537.8,506.7 1539.7,502.3 1541.6,497.9 1543.4,497.8 1545.3,496.7 1547.2,499.7 1549.1,500.4 1550.8,499.6 1552.4,500.4 1554.1,499.2 1555.8,500.5 1557.5,501.2 1559.2,501.7 1561.1,499.6 1563.0,497.9 1564.2,490.4 1565.7,487.1 1567.1,483.5 1568.6,481.6 1570.2,483.8 1571.8,487.8 1573.4,487.4 1574.9,489.7 1576.5,489.2 1578.1,490.4 1580.6,487.8 1582.5,489.5 1584.4,492.9 1586.2,493.8 1588.1,496.7 1589.4,501.9 1590.7,505.5 1593.2,500.4 1595.7,504.2 1597.3,505.1 1598.8,504.6 1600.4,503.7 1602.0,504.2 1604.5,501.7 1607.0,490.4 1609.5,481.6 1612.1,497.9 1614.6,494.1 1615.8,501.7 1617.1,492.3 1618.4,484.1 1620.2,475.7 1622.1,468.3 1623.4,479.3 1624.7,490.4 1626.6,495.2 1628.4,501.7 1631.0,505.5 1632.7,506.2 1634.3,506.6 1636.0,508.0 1637.6,507.9 1639.2,506.6 1640.7,504.4 1642.3,503.0 1644.2,500.5 1646.1,499.2 1647.9,497.8 1649.8,494.1 1651.7,495.5 1653.6,497.9 1655.5,499.5 1657.4,501.7 1659.3,498.0 1661.2,496.7 1663.7,475.3 1665.6,483.2 1667.5,491.6 1670.0,509.3 1671.9,511.7 1673.8,514.3 1675.5,515.1 1677.1,515.2 1678.8,516.8 1680.5,517.2 1682.1,516.5 1683.8,518.1 1685.7,515.6 1687.6,514.3 1689.3,510.4 1691.0,508.2 1692.7,505.5 1694.6,501.9 1696.4,500.4 1698.1,500.1 1699.8,501.7 1701.5,503.0 1703.3,501.1 1705.2,500.4 1706.8,490.6 1708.4,480.3 1710.3,492.9 1712.8,494.1 1714.7,504.9 1716.6,515.6 1718.5,518.1 1720.4,519.3 1722.0,519.4 1723.6,519.2 1725.1,519.3 1726.7,518.1 1728.4,516.1 1730.0,514.3 1731.7,513.0 1733.4,512.5 1735.0,508.8 1736.7,508.0 1738.3,507.9 1740.0,506.7 1741.4,504.5 1742.8,501.7 1744.7,503.8 1746.6,508.0 1749.1,513.0 1751.6,499.2 1753.2,490.6 1754.8,480.3 1756.3,487.5 1757.9,492.9 1760.4,501.7 1762.9,508.0 1764.6,507.9 1766.3,507.7 1768.0,506.7 1769.9,509.3 1771.8,510.5 1773.4,509.6 1774.9,510.6 1776.5,510.5 1778.1,510.5 1780.6,508.0 1783.1,501.7 1785.6,511.8 1787.5,511.3 1789.4,509.2 1791.9,505.5 1794.4,479.0 1796.3,479.1 1798.2,477.8 1799.5,486.6 1800.7,499.2 1802.0,510.5 1804.5,506.7 1807.0,510.5 1809.5,511.8 1810.8,511.8"/>
<!-- tooltip -->
<rect x="872.5" y="476.5" width="286.5" height="58.5" rx="4" fill="#fff" stroke="#e8e8e8" style="filter:drop-shadow(2px 3px 2.5px rgba(0,0,0,.33))"/>
<circle cx="887.5" cy="506" r="4.8" fill="#8eace0"/>
<rect x="883.5" y="516.5" width="7" height="7" fill="#dfc08b" transform="rotate(45 887 520)"/>
<!-- hover markers -->
<circle cx="1173.5" cy="485" r="8.3" fill="#dfc08b" opacity=".22"/>
<rect x="1170.4" y="481.9" width="6.2" height="6.2" fill="#dfc08b" transform="rotate(45 1173.5 485)"/>
<circle cx="1173.5" cy="510.2" r="8.8" fill="#8eace0" opacity=".25"/>
<circle cx="1173.5" cy="510.2" r="4.8" fill="#8eace0"/>
<!-- legend dots -->
<circle cx="837.8" cy="658" r="5.6" fill="#8eace0"/>
<circle cx="1090.5" cy="658" r="5.6" fill="#dfc08b"/>
<text transform="translate(318.9,590.6) rotate(-45)" x="0" y="0" font-size="10.5" fill="#8a8d93" text-anchor="end" textLength="53" lengthAdjust="spacingAndGlyphs">01/10/2024</text>
<text transform="translate(340.9,590.6) rotate(-45)" x="0" y="0" font-size="10.5" fill="#8a8d93" text-anchor="end" textLength="25.5" lengthAdjust="spacingAndGlyphs">12:00</text>
<text transform="translate(362.8,590.6) rotate(-45)" x="0" y="0" font-size="10.5" fill="#8a8d93" text-anchor="end" textLength="53" lengthAdjust="spacingAndGlyphs">02/10/2024</text>
<text transform="translate(384.8,590.6) rotate(-45)" x="0" y="0" font-size="10.5" fill="#8a8d93" text-anchor="end" textLength="25.5" lengthAdjust="spacingAndGlyphs">12:00</text>
<text transform="translate(406.8,590.6) rotate(-45)" x="0" y="0" font-size="10.5" fill="#8a8d93" text-anchor="end" textLength="53" lengthAdjust="spacingAndGlyphs">03/10/2024</text>
<text transform="translate(428.8,590.6) rotate(-45)" x="0" y="0" font-size="10.5" fill="#8a8d93" text-anchor="end" textLength="25.5" lengthAdjust="spacingAndGlyphs">12:00</text>
<text transform="translate(450.8,590.6) rotate(-45)" x="0" y="0" font-size="10.5" fill="#8a8d93" text-anchor="end" textLength="53" lengthAdjust="spacingAndGlyphs">04/10/2024</text>
<text transform="translate(472.7,590.6) rotate(-45)" x="0" y="0" font-size="10.5" fill="#8a8d93" text-anchor="end" textLength="25.5" lengthAdjust="spacingAndGlyphs">12:00</text>
<text transform="translate(494.7,590.6) rotate(-45)" x="0" y="0" font-size="10.5" fill="#8a8d93" text-anchor="end" textLength="53" lengthAdjust="spacingAndGlyphs">05/10/2024</text>
<text transform="translate(516.7,590.6) rotate(-45)" x="0" y="0" font-size="10.5" fill="#8a8d93" text-anchor="end" textLength="25.5" lengthAdjust="spacingAndGlyphs">12:00</text>
<text transform="translate(538.6,590.6) rotate(-45)" x="0" y="0" font-size="10.5" fill="#8a8d93" text-anchor="end" textLength="53" lengthAdjust="spacingAndGlyphs">06/10/2024</text>
<text transform="translate(560.6,590.6) rotate(-45)" x="0" y="0" font-size="10.5" fill="#8a8d93" text-anchor="end" textLength="25.5" lengthAdjust="spacingAndGlyphs">12:00</text>
<text transform="translate(582.6,590.6) rotate(-45)" x="0" y="0" font-size="10.5" fill="#8a8d93" text-anchor="end" textLength="53" lengthAdjust="spacingAndGlyphs">07/10/2024</text>
<text transform="translate(604.6,590.6) rotate(-45)" x="0" y="0" font-size="10.5" fill="#8a8d93" text-anchor="end" textLength="25.5" lengthAdjust="spacingAndGlyphs">12:00</text>
<text transform="translate(626.5,590.6) rotate(-45)" x="0" y="0" font-size="10.5" fill="#8a8d93" text-anchor="end" textLength="53" lengthAdjust="spacingAndGlyphs">08/10/2024</text>
<text transform="translate(648.5,590.6) rotate(-45)" x="0" y="0" font-size="10.5" fill="#8a8d93" text-anchor="end" textLength="25.5" lengthAdjust="spacingAndGlyphs">12:00</text>
<text transform="translate(670.5,590.6) rotate(-45)" x="0" y="0" font-size="10.5" fill="#8a8d93" text-anchor="end" textLength="53" lengthAdjust="spacingAndGlyphs">09/10/2024</text>
<text transform="translate(692.5,590.6) rotate(-45)" x="0" y="0" font-size="10.5" fill="#8a8d93" text-anchor="end" textLength="25.5" lengthAdjust="spacingAndGlyphs">12:00</text>
<text transform="translate(714.5,590.6) rotate(-45)" x="0" y="0" font-size="10.5" fill="#8a8d93" text-anchor="end" textLength="53" lengthAdjust="spacingAndGlyphs">10/10/2024</text>
<text transform="translate(736.4,590.6) rotate(-45)" x="0" y="0" font-size="10.5" fill="#8a8d93" text-anchor="end" textLength="25.5" lengthAdjust="spacingAndGlyphs">12:00</text>
<text transform="translate(758.4,590.6) rotate(-45)" x="0" y="0" font-size="10.5" fill="#8a8d93" text-anchor="end" textLength="53" lengthAdjust="spacingAndGlyphs">11/10/2024</text>
<text transform="translate(780.4,590.6) rotate(-45)" x="0" y="0" font-size="10.5" fill="#8a8d93" text-anchor="end" textLength="25.5" lengthAdjust="spacingAndGlyphs">12:00</text>
<text transform="translate(802.4,590.6) rotate(-45)" x="0" y="0" font-size="10.5" fill="#8a8d93" text-anchor="end" textLength="53" lengthAdjust="spacingAndGlyphs">12/10/2024</text>
<text transform="translate(824.3,590.6) rotate(-45)" x="0" y="0" font-size="10.5" fill="#8a8d93" text-anchor="end" textLength="25.5" lengthAdjust="spacingAndGlyphs">12:00</text>
<text transform="translate(846.3,590.6) rotate(-45)" x="0" y="0" font-size="10.5" fill="#8a8d93" text-anchor="end" textLength="53" lengthAdjust="spacingAndGlyphs">13/10/2024</text>
<text transform="translate(868.3,590.6) rotate(-45)" x="0" y="0" font-size="10.5" fill="#8a8d93" text-anchor="end" textLength="25.5" lengthAdjust="spacingAndGlyphs">12:00</text>
<text transform="translate(890.2,590.6) rotate(-45)" x="0" y="0" font-size="10.5" fill="#8a8d93" text-anchor="end" textLength="53" lengthAdjust="spacingAndGlyphs">14/10/2024</text>
<text transform="translate(912.2,590.6) rotate(-45)" x="0" y="0" font-size="10.5" fill="#8a8d93" text-anchor="end" textLength="25.5" lengthAdjust="spacingAndGlyphs">12:00</text>
<text transform="translate(934.2,590.6) rotate(-45)" x="0" y="0" font-size="10.5" fill="#8a8d93" text-anchor="end" textLength="53" lengthAdjust="spacingAndGlyphs">15/10/2024</text>
<text transform="translate(956.2,590.6) rotate(-45)" x="0" y="0" font-size="10.5" fill="#8a8d93" text-anchor="end" textLength="25.5" lengthAdjust="spacingAndGlyphs">12:00</text>
<text transform="translate(978.1,590.6) rotate(-45)" x="0" y="0" font-size="10.5" fill="#8a8d93" text-anchor="end" textLength="53" lengthAdjust="spacingAndGlyphs">16/10/2024</text>
<text transform="translate(1000.1,590.6) rotate(-45)" x="0" y="0" font-size="10.5" fill="#8a8d93" text-anchor="end" textLength="25.5" lengthAdjust="spacingAndGlyphs">12:00</text>
<text transform="translate(1022.1,590.6) rotate(-45)" x="0" y="0" font-size="10.5" fill="#8a8d93" text-anchor="end" textLength="53" lengthAdjust="spacingAndGlyphs">17/10/2024</text>
<text transform="translate(1044.1,590.6) rotate(-45)" x="0" y="0" font-size="10.5" fill="#8a8d93" text-anchor="end" textLength="25.5" lengthAdjust="spacingAndGlyphs">12:00</text>
<text transform="translate(1066.1,590.6) rotate(-45)" x="0" y="0" font-size="10.5" fill="#8a8d93" text-anchor="end" textLength="53" lengthAdjust="spacingAndGlyphs">18/10/2024</text>
<text transform="translate(1088.0,590.6) rotate(-45)" x="0" y="0" font-size="10.5" fill="#8a8d93" text-anchor="end" textLength="25.5" lengthAdjust="spacingAndGlyphs">12:00</text>
<text transform="translate(1110.0,590.6) rotate(-45)" x="0" y="0" font-size="10.5" fill="#8a8d93" text-anchor="end" textLength="53" lengthAdjust="spacingAndGlyphs">19/10/2024</text>
<text transform="translate(1132.0,590.6) rotate(-45)" x="0" y="0" font-size="10.5" fill="#8a8d93" text-anchor="end" textLength="25.5" lengthAdjust="spacingAndGlyphs">12:00</text>
<text transform="translate(1154.0,590.6) rotate(-45)" x="0" y="0" font-size="10.5" fill="#8a8d93" text-anchor="end" textLength="53" lengthAdjust="spacingAndGlyphs">20/10/2024</text>
<text transform="translate(1175.9,590.6) rotate(-45)" x="0" y="0" font-size="10.5" fill="#8a8d93" text-anchor="end" textLength="25.5" lengthAdjust="spacingAndGlyphs">12:00</text>
<text transform="translate(1197.9,590.6) rotate(-45)" x="0" y="0" font-size="10.5" fill="#8a8d93" text-anchor="end" textLength="53" lengthAdjust="spacingAndGlyphs">21/10/2024</text>
<text transform="translate(1219.9,590.6) rotate(-45)" x="0" y="0" font-size="10.5" fill="#8a8d93" text-anchor="end" textLength="25.5" lengthAdjust="spacingAndGlyphs">12:00</text>
<text transform="translate(1241.8,590.6) rotate(-45)" x="0" y="0" font-size="10.5" fill="#8a8d93" text-anchor="end" textLength="53" lengthAdjust="spacingAndGlyphs">22/10/2024</text>
<text transform="translate(1263.8,590.6) rotate(-45)" x="0" y="0" font-size="10.5" fill="#8a8d93" text-anchor="end" textLength="25.5" lengthAdjust="spacingAndGlyphs">12:00</text>
<text transform="translate(1285.8,590.6) rotate(-45)" x="0" y="0" font-size="10.5" fill="#8a8d93" text-anchor="end" textLength="53" lengthAdjust="spacingAndGlyphs">23/10/2024</text>
<text transform="translate(1307.8,590.6) rotate(-45)" x="0" y="0" font-size="10.5" fill="#8a8d93" text-anchor="end" textLength="25.5" lengthAdjust="spacingAndGlyphs">12:00</text>
<text transform="translate(1329.8,590.6) rotate(-45)" x="0" y="0" font-size="10.5" fill="#8a8d93" text-anchor="end" textLength="53" lengthAdjust="spacingAndGlyphs">24/10/2024</text>
<text transform="translate(1351.7,590.6) rotate(-45)" x="0" y="0" font-size="10.5" fill="#8a8d93" text-anchor="end" textLength="25.5" lengthAdjust="spacingAndGlyphs">12:00</text>
<text transform="translate(1373.7,590.6) rotate(-45)" x="0" y="0" font-size="10.5" fill="#8a8d93" text-anchor="end" textLength="53" lengthAdjust="spacingAndGlyphs">25/10/2024</text>
<text transform="translate(1395.7,590.6) rotate(-45)" x="0" y="0" font-size="10.5" fill="#8a8d93" text-anchor="end" textLength="25.5" lengthAdjust="spacingAndGlyphs">12:00</text>
<text transform="translate(1417.7,590.6) rotate(-45)" x="0" y="0" font-size="10.5" fill="#8a8d93" text-anchor="end" textLength="53" lengthAdjust="spacingAndGlyphs">26/10/2024</text>
<text transform="translate(1439.6,590.6) rotate(-45)" x="0" y="0" font-size="10.5" fill="#8a8d93" text-anchor="end" textLength="25.5" lengthAdjust="spacingAndGlyphs">12:00</text>
<text transform="translate(1461.6,590.6) rotate(-45)" x="0" y="0" font-size="10.5" fill="#8a8d93" text-anchor="end" textLength="53" lengthAdjust="spacingAndGlyphs">27/10/2024</text>
<text transform="translate(1483.6,590.6) rotate(-45)" x="0" y="0" font-size="10.5" fill="#8a8d93" text-anchor="end" textLength="25.5" lengthAdjust="spacingAndGlyphs">12:00</text>
<text transform="translate(1505.6,590.6) rotate(-45)" x="0" y="0" font-size="10.5" fill="#8a8d93" text-anchor="end" textLength="53" lengthAdjust="spacingAndGlyphs">28/10/2024</text>
<text transform="translate(1527.5,590.6) rotate(-45)" x="0" y="0" font-size="10.5" fill="#8a8d93" text-anchor="end" textLength="25.5" lengthAdjust="spacingAndGlyphs">12:00</text>
<text transform="translate(1549.5,590.6) rotate(-45)" x="0" y="0" font-size="10.5" fill="#8a8d93" text-anchor="end" textLength="53" lengthAdjust="spacingAndGlyphs">29/10/2024</text>
<text transform="translate(1571.5,590.6) rotate(-45)" x="0" y="0" font-size="10.5" fill="#8a8d93" text-anchor="end" textLength="25.5" lengthAdjust="spacingAndGlyphs">12:00</text>
<text transform="translate(1593.5,590.6) rotate(-45)" x="0" y="0" font-size="10.5" fill="#8a8d93" text-anchor="end" textLength="53" lengthAdjust="spacingAndGlyphs">30/10/2024</text>
<text transform="translate(1615.4,590.6) rotate(-45)" x="0" y="0" font-size="10.5" fill="#8a8d93" text-anchor="end" textLength="25.5" lengthAdjust="spacingAndGlyphs">12:00</text>
<text transform="translate(1637.4,590.6) rotate(-45)" x="0" y="0" font-size="10.5" fill="#8a8d93" text-anchor="end" textLength="53" lengthAdjust="spacingAndGlyphs">31/10/2024</text>
<text transform="translate(1659.4,590.6) rotate(-45)" x="0" y="0" font-size="10.5" fill="#8a8d93" text-anchor="end" textLength="25.5" lengthAdjust="spacingAndGlyphs">12:00</text>
<text transform="translate(1681.3,590.6) rotate(-45)" x="0" y="0" font-size="10.5" fill="#8a8d93" text-anchor="end" textLength="53" lengthAdjust="spacingAndGlyphs">01/11/2024</text>
<text transform="translate(1703.3,590.6) rotate(-45)" x="0" y="0" font-size="10.5" fill="#8a8d93" text-anchor="end" textLength="25.5" lengthAdjust="spacingAndGlyphs">12:00</text>
<text transform="translate(1725.3,590.6) rotate(-45)" x="0" y="0" font-size="10.5" fill="#8a8d93" text-anchor="end" textLength="53" lengthAdjust="spacingAndGlyphs">02/11/2024</text>
<text transform="translate(1747.3,590.6) rotate(-45)" x="0" y="0" font-size="10.5" fill="#8a8d93" text-anchor="end" textLength="25.5" lengthAdjust="spacingAndGlyphs">12:00</text>
<text transform="translate(1769.2,590.6) rotate(-45)" x="0" y="0" font-size="10.5" fill="#8a8d93" text-anchor="end" textLength="53" lengthAdjust="spacingAndGlyphs">03/11/2024</text>
<text transform="translate(1791.2,590.6) rotate(-45)" x="0" y="0" font-size="10.5" fill="#8a8d93" text-anchor="end" textLength="25.5" lengthAdjust="spacingAndGlyphs">12:00</text>
<text transform="translate(1813.2,590.6) rotate(-45)" x="0" y="0" font-size="10.5" fill="#8a8d93" text-anchor="end" textLength="53" lengthAdjust="spacingAndGlyphs">04/11/2024</text>
<text x="39.5" y="89.2" font-size="14" font-weight="bold" fill="#c0d2ef" textLength="68" lengthAdjust="spacingAndGlyphs">Ubicaciones</text>
<text x="39.5" y="125.6" font-size="14" font-weight="bold" fill="#c0d2ef" textLength="160.5" lengthAdjust="spacingAndGlyphs">Plan de Verificación y Medida</text>
<text x="39.5" y="162.0" font-size="14" font-weight="bold" fill="#ffffff" textLength="123" lengthAdjust="spacingAndGlyphs">Visualización de Datos</text>
<text x="39.5" y="198.4" font-size="14" font-weight="bold" fill="#c0d2ef" textLength="78" lengthAdjust="spacingAndGlyphs">Últimos Datos</text>
<text x="39.5" y="234.8" font-size="14" font-weight="bold" fill="#c0d2ef" textLength="103.5" lengthAdjust="spacingAndGlyphs">Gestión Energética</text>
<text x="39.5" y="271.2" font-size="14" font-weight="bold" fill="#c0d2ef" textLength="50.5" lengthAdjust="spacingAndGlyphs">Informes</text>
<text x="39.5" y="307.6" font-size="14" font-weight="bold" fill="#c0d2ef" textLength="129" lengthAdjust="spacingAndGlyphs">Configuración Proyecto</text>
<text x="39.5" y="344.0" font-size="14" font-weight="bold" fill="#c0d2ef" textLength="122.5" lengthAdjust="spacingAndGlyphs">Equipos y Dispositivos</text>
<text x="39.5" y="380.4" font-size="14" font-weight="bold" fill="#c0d2ef" textLength="135.5" lengthAdjust="spacingAndGlyphs">Visualización de Alarmas</text>
<text x="39.5" y="453" font-size="14" font-weight="bold" fill="#c0d2ef" textLength="83.5" lengthAdjust="spacingAndGlyphs">Administración</text>
<text x="315.5" y="24.3" font-size="13.5" fill="#3b3f5c" textLength="118" lengthAdjust="spacingAndGlyphs">Hospital del Henares</text>
<text x="256.5" y="78.3" font-size="13.5" font-weight="bold" fill="#1d2b4f" textLength="122" lengthAdjust="spacingAndGlyphs">Visualización de Datos</text>
<text x="267.5" y="150.5" font-size="16" font-weight="bold" fill="#1d2b4f" textLength="60.5" lengthAdjust="spacingAndGlyphs">Ubicación</text>
<text x="394" y="149.4" font-size="12.5" fill="#3b3f5c" textLength="105" lengthAdjust="spacingAndGlyphs">Hospital del Henares</text>
<text x="267.5" y="219" font-size="12.5" font-weight="bold" fill="#1d2b4f" textLength="63" lengthAdjust="spacingAndGlyphs">Eje Principal</text>
<text x="1034" y="219" font-size="12.5" font-weight="bold" fill="#1d2b4f" textLength="75" lengthAdjust="spacingAndGlyphs">Eje Secundario</text>
<text x="267.5" y="313.6" font-size="12.5" font-weight="bold" fill="#1d2b4f" textLength="95.5" lengthAdjust="spacingAndGlyphs">Agregado Principal</text>
<text x="1034" y="313.6" font-size="12.5" font-weight="bold" fill="#1d2b4f" textLength="107.5" lengthAdjust="spacingAndGlyphs">Agregado Secundario</text>
<text x="267.5" y="367.6" font-size="12.5" font-weight="bold" fill="#1d2b4f" textLength="35" lengthAdjust="spacingAndGlyphs">Fechas</text>
<text x="491" y="367.6" font-size="12.5" font-weight="bold" fill="#1d2b4f" textLength="54.5" lengthAdjust="spacingAndGlyphs">Frecuencia</text>
<text x="284" y="242" font-size="12" fill="#34466c" textLength="237.5" lengthAdjust="spacingAndGlyphs">CAFETERÍA - Cafetería Público - Temperatura</text>
<text x="1050.5" y="242" font-size="12" fill="#5f5037" textLength="221" lengthAdjust="spacingAndGlyphs">CAFETERÍA - Cafetería Público - Humedad</text>
<text x="281" y="340.2" font-size="12.5" fill="#3b3f5c" textLength="49.5" lengthAdjust="spacingAndGlyphs">Promedio</text>
<text x="1047.5" y="340.2" font-size="12.5" fill="#3b3f5c" textLength="49.5" lengthAdjust="spacingAndGlyphs">Promedio</text>
<text x="1815" y="339.2" font-size="12" fill="#ffffff" textLength="45.5" lengthAdjust="spacingAndGlyphs">Refrescar</text>
<text x="277.5" y="393.6" font-size="12" fill="#8b909b" textLength="57.5" lengthAdjust="spacingAndGlyphs">01/10/2024</text>
<text x="369.5" y="393.6" font-size="12" fill="#8b909b" textLength="57.5" lengthAdjust="spacingAndGlyphs">03/11/2024</text>
<text x="502.5" y="395" font-size="12.5" fill="#8b909b" textLength="75" lengthAdjust="spacingAndGlyphs">Sin Frecuencia</text>
<text x="623.5" y="395" font-size="12.5" fill="#8b909b" textLength="28" lengthAdjust="spacingAndGlyphs" text-anchor="middle">1 min</text>
<text x="683.0" y="395" font-size="12.5" font-weight="bold" fill="#ffffff" textLength="30" lengthAdjust="spacingAndGlyphs" text-anchor="middle">5 min</text>
<text x="745.5" y="395" font-size="12.5" fill="#8b909b" textLength="35" lengthAdjust="spacingAndGlyphs" text-anchor="middle">15 min</text>
<text x="811.5" y="395" font-size="12.5" fill="#8b909b" textLength="35" lengthAdjust="spacingAndGlyphs" text-anchor="middle">30 min</text>
<text x="863.5" y="395" font-size="12.5" fill="#8b909b" textLength="7.5" lengthAdjust="spacingAndGlyphs" text-anchor="middle">h</text>
<text x="901.2" y="395" font-size="12.5" fill="#8b909b" textLength="8" lengthAdjust="spacingAndGlyphs" text-anchor="middle">d</text>
<text x="940.5" y="395" font-size="12.5" fill="#8b909b" textLength="11.5" lengthAdjust="spacingAndGlyphs" text-anchor="middle">m</text>
<text x="980.2" y="395" font-size="12.5" fill="#8b909b" textLength="7.5" lengthAdjust="spacingAndGlyphs" text-anchor="middle">a</text>
<text x="277" y="424.8" font-size="10.5" fill="#8a8d93" textLength="11" lengthAdjust="spacingAndGlyphs">27</text>
<text x="277" y="474.8" font-size="10.5" fill="#8a8d93" textLength="11" lengthAdjust="spacingAndGlyphs">24</text>
<text x="277" y="524.3" font-size="10.5" fill="#8a8d93" textLength="11" lengthAdjust="spacingAndGlyphs">21</text>
<text x="277" y="573.8" font-size="10.5" fill="#8a8d93" textLength="11" lengthAdjust="spacingAndGlyphs">18</text>
<text x="1839.5" y="424.8" font-size="10.5" fill="#8a8d93" textLength="11" lengthAdjust="spacingAndGlyphs">80</text>
<text x="1839.5" y="474.8" font-size="10.5" fill="#8a8d93" textLength="11" lengthAdjust="spacingAndGlyphs">60</text>
<text x="1839.5" y="524.3" font-size="10.5" fill="#8a8d93" textLength="11" lengthAdjust="spacingAndGlyphs">40</text>
<text x="1839.5" y="573.8" font-size="10.5" fill="#8a8d93" textLength="11" lengthAdjust="spacingAndGlyphs">20</text>
<text x="881" y="496" font-size="11" font-weight="bold" fill="#1d2b4f" textLength="82" lengthAdjust="spacingAndGlyphs">20/10/2024 12:35</text>
<text x="898" y="510.3" font-size="11.5" fill="#3b3f5c" textLength="218" lengthAdjust="spacingAndGlyphs">CAFETERÍA - Cafetería Público - Temperatura:</text>
<text x="1118.5" y="510.3" font-size="11.5" font-weight="bold" fill="#1d2b4f" textLength="34" lengthAdjust="spacingAndGlyphs">21.6 °C</text>
<text x="898" y="523.8" font-size="11.5" fill="#3b3f5c" textLength="201.5" lengthAdjust="spacingAndGlyphs">CAFETERÍA - Cafetería Público - Humedad:</text>
<text x="1104.5" y="523.8" font-size="11.5" font-weight="bold" fill="#1d2b4f" textLength="23.5" lengthAdjust="spacingAndGlyphs">54 %</text>
<text x="848" y="662.9" font-size="11.5" font-weight="bold" fill="#1d2b4f" textLength="214" lengthAdjust="spacingAndGlyphs">CAFETERÍA - Cafetería Público - Temperatura</text>
<text x="1100.5" y="662.9" font-size="11.5" fill="#4a4f66" textLength="200" lengthAdjust="spacingAndGlyphs">CAFETERÍA - Cafetería Público - Humedad</text>
<text x="283" y="710.2" font-size="11.5" font-weight="bold" fill="#1d2b4f" textLength="39.5" lengthAdjust="spacingAndGlyphs">Variable</text>
<text x="788" y="710.2" font-size="11.5" font-weight="bold" fill="#1d2b4f" textLength="24" lengthAdjust="spacingAndGlyphs">Total</text>
<text x="992" y="710.2" font-size="11.5" font-weight="bold" fill="#1d2b4f" textLength="47.5" lengthAdjust="spacingAndGlyphs">Promedio</text>
<text x="1175" y="710.2" font-size="11.5" font-weight="bold" fill="#1d2b4f" textLength="41.5" lengthAdjust="spacingAndGlyphs">Mediana</text>
<text x="1343.5" y="710.2" font-size="11.5" font-weight="bold" fill="#1d2b4f" textLength="37.5" lengthAdjust="spacingAndGlyphs">Máximo</text>
<text x="1595.5" y="710.2" font-size="11.5" font-weight="bold" fill="#1d2b4f" textLength="36.5" lengthAdjust="spacingAndGlyphs">Mínimo</text>
<text x="283" y="752.3" font-size="12" fill="#454b5e" textLength="212.5" lengthAdjust="spacingAndGlyphs">CAFETERÍA - Cafetería Público - Humedad</text>
<text x="283" y="793" font-size="12" fill="#454b5e" textLength="228" lengthAdjust="spacingAndGlyphs">CAFETERÍA - Cafetería Público - Temperatura</text>
<text x="790" y="752.5" font-size="12" fill="#454b5e" textLength="49.5" lengthAdjust="spacingAndGlyphs">231740 %</text>
<text x="790" y="793" font-size="12" fill="#454b5e" textLength="72" lengthAdjust="spacingAndGlyphs">104966.200 °C</text>
<text x="994" y="752.5" font-size="12" fill="#454b5e" textLength="46" lengthAdjust="spacingAndGlyphs">47.507 %</text>
<text x="994" y="793" font-size="12" fill="#454b5e" textLength="47" lengthAdjust="spacingAndGlyphs">21.518 °C</text>
<text x="1176.5" y="752.5" font-size="12" fill="#454b5e" textLength="25" lengthAdjust="spacingAndGlyphs">49 %</text>
<text x="1176.5" y="793" font-size="12" fill="#454b5e" textLength="35" lengthAdjust="spacingAndGlyphs">21.4 °C</text>
<text x="1345.5" y="746.3" font-size="11.5" fill="#454b5e" textLength="24.5" lengthAdjust="spacingAndGlyphs">63 %</text>
<text x="1345.5" y="758.1" font-size="10" fill="#7a7f8a" textLength="93" lengthAdjust="spacingAndGlyphs">16/10/2024, 11:50:12</text>
<text x="1345.5" y="786.7" font-size="11.5" fill="#454b5e" textLength="35" lengthAdjust="spacingAndGlyphs">25.4 °C</text>
<text x="1345.5" y="798.8" font-size="10" fill="#7a7f8a" textLength="88" lengthAdjust="spacingAndGlyphs">1/10/2024, 18:51:21</text>
<text x="1598" y="746.3" font-size="11.5" fill="#454b5e" textLength="24.7" lengthAdjust="spacingAndGlyphs">26 %</text>
<text x="1598" y="758.1" font-size="10" fill="#7a7f8a" textLength="93.5" lengthAdjust="spacingAndGlyphs">27/10/2024, 16:49:24</text>
<text x="1598" y="786.7" font-size="11.5" fill="#454b5e" textLength="25.7" lengthAdjust="spacingAndGlyphs">20 °C</text>
<text x="1598" y="798.8" font-size="10" fill="#7a7f8a" textLength="88" lengthAdjust="spacingAndGlyphs">17/10/2024, 6:30:14</text>
<text x="257" y="939.5" font-size="9.5" font-weight="bold" fill="#6e737d" textLength="91.5" lengthAdjust="spacingAndGlyphs">© Grupo SENER 2024.</text>
<text x="349.5" y="939.5" font-size="9.5" fill="#7c818b" textLength="132" lengthAdjust="spacingAndGlyphs">Todos los Derechos Reservados</text>

<!-- respira logo -->
<g fill="#ffffff">
<text x="17.5" y="20.8" font-size="47" font-weight="bold" stroke="#ffffff" stroke-width="1.3" textLength="123" lengthAdjust="spacingAndGlyphs">respira</text>
<text x="74.5" y="41.6" font-size="12" textLength="13" lengthAdjust="spacingAndGlyphs">by</text>
<text x="91" y="42" font-size="18.5" stroke="#ffffff" stroke-width=".7" textLength="50" lengthAdjust="spacingAndGlyphs">sener</text>
</g>
<polygon points="17,8.2 145,4.8 145,6.6 17,10" fill="#05183f"/>
<polygon points="17,16.2 145,12.8 145,15 17,18.4" fill="#05183f"/>
<!-- collapse -->
<polyline points="213,16 207.2,22.2 213,28.4" fill="none" stroke="#ffffff" stroke-width="2" stroke-linecap="round" stroke-linejoin="round"/>
<polyline points="219,16 213.2,22.2 219,28.4" fill="none" stroke="#7d8aa8" stroke-width="2" stroke-linecap="round" stroke-linejoin="round"/>
<g fill="#c3d3ee">
<!-- pin -->
<path d="M18,74 C14,74 11,77 11,81 C11,85.5 18,93 18,93 C18,93 25,85.5 25,81 C25,77 22,74 18,74 Z M18,78.6 A2.3,2.3 0 1 0 18,83.2 A2.3,2.3 0 1 0 18,78.6 Z" fill-rule="evenodd"/>
<!-- dashboard -->
<rect x="9" y="111" width="9.5" height="10.5"/><rect x="9" y="123" width="9.5" height="5"/>
<rect x="20" y="111" width="7" height="5"/><rect x="20" y="117.5" width="7" height="10.5"/>
<!-- bulb -->
<path d="M18,220.3 A7,7 0 0 0 11,227.3 C11,230 12.5,232 14.5,233.3 L14.5,236 C14.5,237 15.5,237.8 16.5,237.8 L19.5,237.8 C20.5,237.8 21.5,237 21.5,236 L21.5,233.3 C23.5,232 25,230 25,227.3 A7,7 0 0 0 18,220.3 Z"/>
<!-- informes -->
<rect x="9.5" y="256.7" width="17.3" height="16.5" rx="1.8"/>
<!-- gear -->
<path d="M16.3,292.2 L19.7,292.2 L20.3,294.8 L22.2,295.6 L24.5,294.1 L26.9,296.5 L25.4,298.8 L26.2,300.7 L27.3,301 L27.3,303.2 L26.2,303.5 L25.4,305.4 L26.9,307.7 L24.5,310.1 L22.2,308.6 L20.3,309.4 L19.7,311 L16.3,311 L15.7,309.4 L13.8,308.6 L11.5,310.1 L9.1,307.7 L10.6,305.4 L9.8,303.5 L9,303.2 L9,301 L9.8,300.7 L10.6,298.8 L9.1,296.5 L11.5,294.1 L13.8,295.6 L15.7,294.8 Z M18,298.8 A2.9,2.9 0 1 0 18,304.6 A2.9,2.9 0 1 0 18,298.8 Z" fill-rule="evenodd"/>
<!-- dashboard 2 -->
<rect x="9" y="329.6" width="9.5" height="10.5"/><rect x="9" y="341.4" width="9.5" height="4.8"/>
<rect x="20" y="329.6" width="7" height="4.8"/><rect x="20" y="335.9" width="7" height="10.3"/>
<!-- person -->
<circle cx="18" cy="443.6" r="4"/>
<path d="M10,455 L10,453.5 C10,450.5 14.5,448.8 18,448.8 C21.5,448.8 26,450.5 26,453.5 L26,455 Z"/>
</g>
<!-- bulb inner detail -->
<path d="M16.5,226 L18,228.5 L19.5,226 M18,228.5 L18,232" stroke="#3c5a9a" stroke-width="1" fill="none"/>
<line x1="15.5" y1="234.5" x2="20.5" y2="234.5" stroke="#8ea0c8" stroke-width=".8"/>
<!-- informes bars -->
<g fill="#0b2a66"><rect x="12.8" y="263" width="1.8" height="7"/><rect x="16.6" y="260" width="1.8" height="10"/><rect x="20.6" y="266" width="1.8" height="4"/></g>
<!-- bar chart (active) -->
<g fill="#ffffff"><rect x="10" y="155.5" width="4" height="8.5"/><rect x="16" y="148" width="4.5" height="16"/><rect x="22" y="153" width="4" height="11"/></g>
<!-- clocks -->
<g fill="none" stroke="#c3d3ee" stroke-width="1.9" stroke-linecap="round">
<circle cx="17.8" cy="192.3" r="8.3"/>
<polyline points="17.6,187.5 17.6,192.6 21,195.6"/>
<circle cx="18.2" cy="376.3" r="7.5"/>
<polyline points="17.8,372.2 17.8,376.7 20.8,379.2"/>
<line x1="9.5" y1="368.5" x2="12.5" y2="366"/>
<line x1="26.5" y1="368.5" x2="23.5" y2="366"/>
</g>
<!-- sidebar chevrons -->
<g fill="none" stroke="#a9bbdd" stroke-width="1.2">
<polyline points="214,121 218,125.5 222,121"/>
<polyline points="214,230.5 218,235 222,230.5"/>
<polyline points="214,303 218,307.5 222,303"/>
<polyline points="214,339.5 218,344 222,339.5"/>
<polyline points="214,448.5 218,453 222,448.5"/>
</g>
<line x1="17" y1="411.5" x2="214" y2="411.5" stroke="#8ea2c9" stroke-width="1.3"/>
<!-- header hospital logo -->
<path d="M276.5,14.4 C275,15.5 275,20 276.5,21 L278.8,21 L278.8,14.4 Z" fill="#35aee8"/>
<rect x="279.3" y="14.4" width="4.3" height="6.6" rx="1" fill="#d52b3d"/>
<rect x="284.5" y="17.6" width="15" height="3" fill="#bfe3f5"/>
<rect x="273.5" y="23.5" width="2.5" height="3" fill="#e46b78"/>
<rect x="276.5" y="24" width="8.5" height="2.5" fill="#c8cacc"/>
<rect x="277" y="21.5" width="6" height="1.5" fill="#dceaf2"/>
<polyline points="505.3,16.3 511.5,22.8 517.8,16.3" fill="none" stroke="#5b6070" stroke-width="1.8"/>
<!-- select chevrons -->
<g fill="none" stroke="#0d2566" stroke-width="2.2" stroke-linecap="square">
<polyline points="641.2,143 645,146.8 648.6,143"/>
<polyline points="1006,333.5 1010,337.3 1013.8,333.3"/>
<polyline points="1773,333.5 1777,337.3 1780.8,333.3"/>
</g>
<!-- chip X -->
<g stroke="#34466c" stroke-width="1.2"><line x1="532.5" y1="234.5" x2="541" y2="242.5"/><line x1="541" y1="234.5" x2="532.5" y2="242.5"/></g>
<g stroke="#5f5037" stroke-width="1.2"><line x1="1283" y1="234.5" x2="1291.5" y2="242.5"/><line x1="1291.5" y1="234.5" x2="1283" y2="242.5"/></g>
<!-- ellipsis -->
<g fill="#8a8e96"><circle cx="274.5" cy="289.8" r=".9"/><circle cx="277.6" cy="289.8" r=".9"/><circle cx="280.7" cy="289.8" r=".9"/>
<circle cx="1041.5" cy="289.8" r=".9"/><circle cx="1044.6" cy="289.8" r=".9"/><circle cx="1047.7" cy="289.8" r=".9"/></g>
<!-- date arrow -->
<g stroke="#3a3f4c" stroke-width="1.3" fill="none"><line x1="346" y1="389.3" x2="355.5" y2="389.3"/><polyline points="352.2,386 355.7,389.3 352.2,392.6"/></g>
<!-- calendar -->
<g fill="#6e6e6e"><path d="M447.5,381.1 L460.4,381.1 Q461.9,381.1 461.9,382.6 L461.9,396 Q461.9,397.5 460.4,397.5 L447.5,397.5 Q446,397.5 446,396 L446,382.6 Q446,381.1 447.5,381.1 Z M447.6,385.6 L447.6,395.9 L460.3,395.9 L460.3,385.6 Z" fill-rule="evenodd"/>
<rect x="448.6" y="379" width="1.4" height="2.5"/><rect x="457.6" y="379" width="1.4" height="2.5"/>
<rect x="449.3" y="387.2" width="4.6" height="4.8" rx=".8"/></g>
<!-- refresh icon -->
<g fill="none" stroke="#ffffff" stroke-width="1.6">
<path d="M1866.3,335.5 A4.6,4.6 0 0 1 1873.5,331.5"/>
<path d="M1874.6,335.2 A4.6,4.6 0 0 1 1867.5,339.3"/>
</g>
<g fill="#ffffff"><polygon points="1871.8,329.2 1875.2,331.8 1871.5,333.6"/><polygon points="1869.2,341.6 1865.8,339 1869.5,337.2"/></g>
<!-- toolbar icons -->
<g stroke="#ffffff" stroke-width="2" fill="none" stroke-linejoin="round"><polyline points="1867.6,434.4 1874.3,428.5 1879.4,431.9 1886.1,426"/></g>
<g fill="#ffffff"><circle cx="1867.6" cy="434.4" r="1.8"/><circle cx="1886.1" cy="426" r="1.8"/></g>
<g fill="#6b7285">
<path d="M1866.8,474 L1872.8,466.5 L1875.5,469.8 L1879.5,463 L1886.9,474 Z"/></g><polyline points="1873.5,467.8 1875.6,471 1877.6,470.3" fill="none" stroke="#ffffff" stroke-width=".9"/><g fill="#6b7285">
<rect x="1870.4" y="505" width="2.2" height="9"/><rect x="1875" y="501" width="2.2" height="13"/><rect x="1879.8" y="509" width="2.2" height="5"/>
<circle cx="1876" cy="541.2" r="2.6"/><circle cx="1871.8" cy="548.7" r="2.6"/><circle cx="1881" cy="552.6" r="2.6"/>
<path d="M1867.5,592.3 L1870.5,592.3 L1871.8,590.3 L1880.3,590.3 L1881.6,592.3 L1885.5,592.3 Q1886.2,592.3 1886.2,593 L1886.2,605.8 Q1886.2,606.5 1885.5,606.5 L1867.5,606.5 Q1866.8,606.5 1866.8,605.8 L1866.8,593 Q1866.8,592.3 1867.5,592.3 Z"/>
<rect x="1868.1" y="644.8" width="16.8" height="16.3" rx="1.5"/>
</g>
<path d="M1875.6,595 A4.5,4.5 0 1 0 1875.6,604 Z" fill="#ffffff"/>
<circle cx="1876" cy="599.5" r="4.5" fill="none" stroke="#ffffff" stroke-width="1.3"/>
<line x1="1868.5" y1="646.5" x2="1884.5" y2="646.5" stroke="#b8bdc8" stroke-width="1"/>
<path d="M1874.4,650.5 L1877.6,650.5 L1877.6,653.8 L1880.5,653.8 L1876,658.2 L1871.5,653.8 L1874.4,653.8 Z" fill="#ffffff"/>
<!-- sort icons -->
<g fill="none" stroke="#2d55d6" stroke-width="1.5" stroke-linecap="round" stroke-linejoin="round">
<line x1="333.2" y1="698.5" x2="333.2" y2="711.5"/><polyline points="330.5,701 333.2,698.3 335.9,701"/>
<line x1="337.2" y1="706" x2="339.8" y2="706"/><line x1="337.2" y1="708.8" x2="341.8" y2="708.8"/><line x1="337.2" y1="711.5" x2="343.8" y2="711.5"/>
</g>
<circle cx="337.6" cy="703.3" r=".8" fill="#2d55d6"/>
<g fill="none" stroke="#1d3770" stroke-width="1.5" stroke-linecap="round" stroke-linejoin="round"><line x1="822.5999999999999" y1="698.5" x2="822.5999999999999" y2="711.5"/><polyline points="820.3,701 822.5999999999999,698.3 825.0,701"/><line x1="830.1999999999999" y1="698.5" x2="830.1999999999999" y2="711.5"/><polyline points="827.5,709.2 830.1999999999999,711.8 833.0,709.2"/></g>
<g fill="none" stroke="#1d3770" stroke-width="1.5" stroke-linecap="round" stroke-linejoin="round"><line x1="1050.1" y1="698.5" x2="1050.1" y2="711.5"/><polyline points="1047.8,701 1050.1,698.3 1052.5,701"/><line x1="1057.7" y1="698.5" x2="1057.7" y2="711.5"/><polyline points="1055.0,709.2 1057.7,711.8 1060.5,709.2"/></g>
<g fill="none" stroke="#1d3770" stroke-width="1.5" stroke-linecap="round" stroke-linejoin="round"><line x1="1226.3" y1="698.5" x2="1226.3" y2="711.5"/><polyline points="1224,701 1226.3,698.3 1228.7,701"/><line x1="1233.9" y1="698.5" x2="1233.9" y2="711.5"/><polyline points="1231.2,709.2 1233.9,711.8 1236.7,709.2"/></g>
<g fill="none" stroke="#1d3770" stroke-width="1.5" stroke-linecap="round" stroke-linejoin="round"><line x1="1392.3" y1="698.5" x2="1392.3" y2="711.5"/><polyline points="1390,701 1392.3,698.3 1394.7,701"/><line x1="1399.9" y1="698.5" x2="1399.9" y2="711.5"/><polyline points="1397.2,709.2 1399.9,711.8 1402.7,709.2"/></g>
<g fill="none" stroke="#1d3770" stroke-width="1.5" stroke-linecap="round" stroke-linejoin="round"><line x1="1642.3" y1="698.5" x2="1642.3" y2="711.5"/><polyline points="1640,701 1642.3,698.3 1644.7,701"/><line x1="1649.9" y1="698.5" x2="1649.9" y2="711.5"/><polyline points="1647.2,709.2 1649.9,711.8 1652.7,709.2"/></g>

<!-- sener footer logo -->
<text x="1790" y="946.7" font-size="39" font-weight="bold" fill="#0a2266" textLength="112" lengthAdjust="spacingAndGlyphs">sener</text>
<g fill="none" stroke="#1f3c7a" stroke-width="1.4" stroke-linecap="round">
<path d="M1748,922.2 C1750.5,921 1754,922 1755.8,925 M1755.8,924.2 C1757,922.6 1759.5,922.4 1761,924.8 M1760,925.5 C1760.8,929.5 1758.5,933.2 1754,933.4 C1752,933.4 1750,932.6 1748,933.2 M1748.3,922.5 C1749.5,924.5 1751.2,927 1751.5,929"/>
<circle cx="1772.3" cy="927.7" r="6"/>
<line x1="1766.3" y1="926.8" x2="1778.3" y2="926.8"/>
<path d="M1770.3,921.9 C1768.8,925 1768.8,930.5 1770.3,933.5 M1774.4,921.9 C1775.9,925 1775.9,930.5 1774.4,933.5"/>
<path d="M1748.4,943 C1747.8,946 1748.8,949.5 1751.7,950.4 M1754.7,938.6 C1752.5,941 1753.2,943.5 1755,945.5 C1756,947 1755.5,948.2 1754.7,948.6 M1760.2,945.6 C1760.3,947.8 1759,949.6 1756.9,950.4"/>
<path d="M1766,946.3 C1767,941 1769.5,939.3 1772.3,939.3 C1775,939.3 1777.3,941 1777.3,942.8 C1775.5,942.5 1774.5,943.8 1775,945 C1775.7,946.3 1777.5,946.3 1778.2,946.3 M1770.8,943.7 C1770.8,945 1771.2,946.2 1771.6,947"/>
<line x1="1766" y1="950.7" x2="1778.6" y2="950.7" stroke-width="1.6"/>
</g>

</svg>
</body></html>
